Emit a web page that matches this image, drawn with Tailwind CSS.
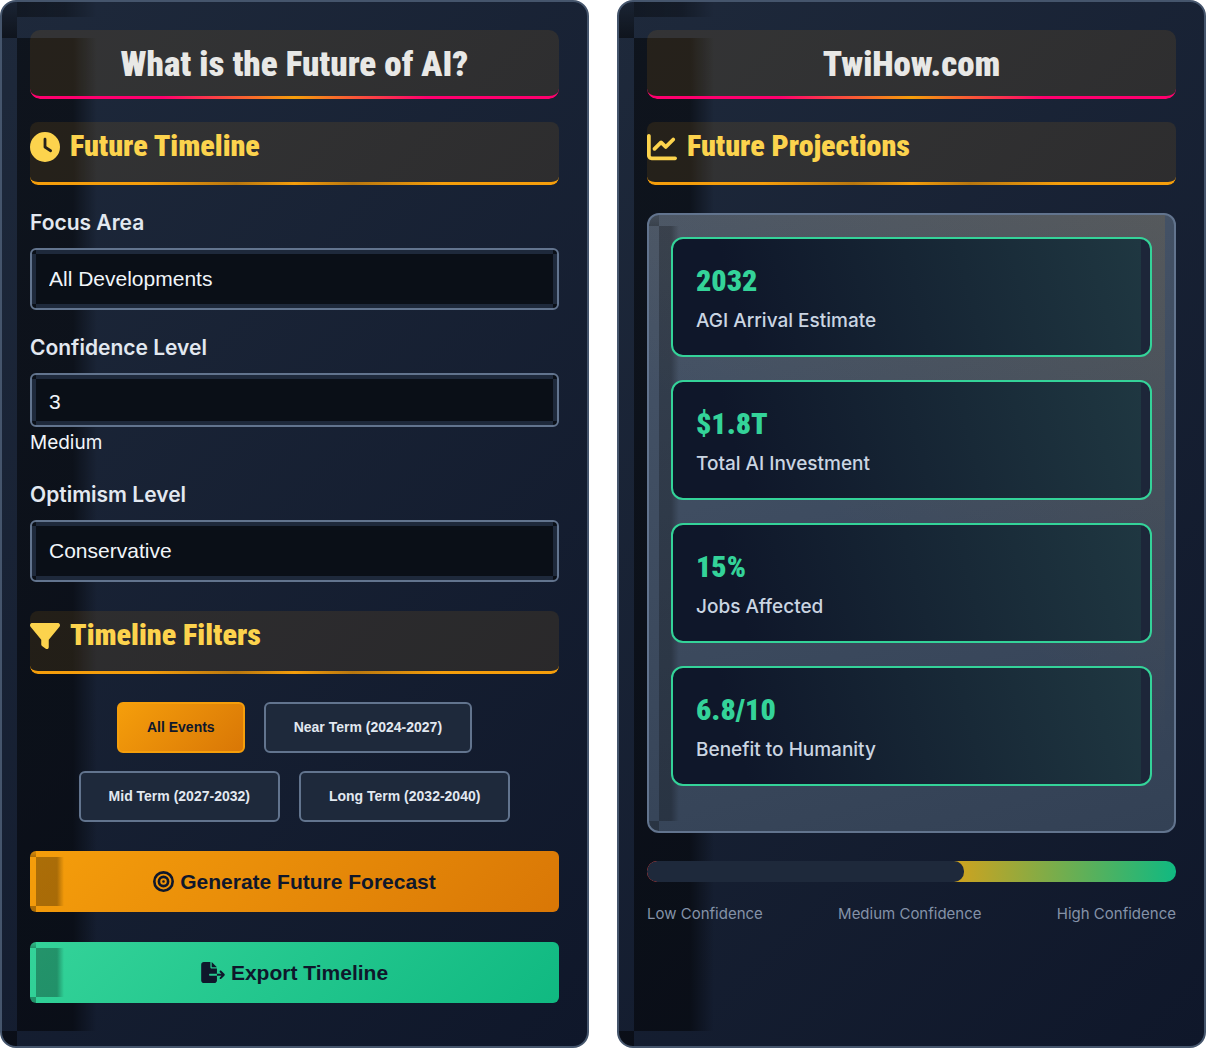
<!DOCTYPE html>
<html lang="en">
<head>
    <meta charset="UTF-8">
    <meta name="viewport" content="width=device-width, initial-scale=1.0">
    <title>What is the Future of AI?</title>
    <script src="https://cdn.jsdelivr.net/npm/@tailwindcss/browser@4"></script>
</head>
<body class="bg-white font-['Inter',sans-serif] text-slate-100">
    <div class="grid grid-cols-2 gap-7 min-h-screen">

        <!-- Controls -->
        <section class="border-2 border-slate-600 rounded-2xl p-7 pb-[43px] [background:linear-gradient(90deg,#00000080,#00000080_70%,#00000000)_15px_36px/80px_calc(100%-51px)_no-repeat,linear-gradient(#00000020,#00000080)_0_0/15px_36px_no-repeat,linear-gradient(90deg,#00000060,#00000050_60%,#00000000)_15px_0/80px_15px_no-repeat,linear-gradient(#00000080,#00000080)_0_100%/15px_15px_no-repeat,linear-gradient(135deg,#1e293b,#0f172a)_border-box]">
            <h1 class="relative h-[69px] rounded-[10px] bg-[#f59e0b]/10 text-center text-[35px] leading-[69px] font-black font-['Roboto_Condensed',Roboto,sans-serif] text-[#e8e8e6] after:absolute after:inset-0 after:rounded-b-[10px] after:border-b-3 after:border-transparent after:[background:linear-gradient(90deg,#ff006e_25%,#f59e0b_50%,#ff006e_75%)_border-box] after:[mask:linear-gradient(#000_0_0)_padding-box_exclude,linear-gradient(#000_0_0)]">What is the Future of AI?</h1>

            <h2 class="relative flex items-start gap-[10px] mt-[23px] h-[63px] rounded-lg bg-[#f59e0b]/10 text-[30px] leading-[48px] font-black font-['Roboto_Condensed',Roboto,sans-serif] text-[#fcd34d] after:absolute after:inset-0 after:rounded-b-lg after:border-b-3 after:border-transparent after:[background:linear-gradient(90deg,#f59e0b_22%,#b8770f_39%,#f59e0b_50%,#b8770f_61%,#f59e0b_78%)_border-box] after:[mask:linear-gradient(#000_0_0)_padding-box_exclude,linear-gradient(#000_0_0)]">
                <svg class="size-[30px] mt-[10px]" viewBox="0 0 512 512" fill="currentColor"><path d="M256 0a256 256 0 1 1 0 512A256 256 0 1 1 256 0zM232 120l0 136c0 8 4 15.5 10.7 20l96 64c11 7.4 25.9 4.4 33.3-6.7s4.4-25.9-6.7-33.3L280 243.2 280 120c0-13.3-10.7-24-24-24s-24 10.7-24 24z"/></svg>
                Future Timeline
            </h2>

            <div class="mt-6">
                <label for="focusArea" class="block mb-[11px] text-[21px] leading-7 font-semibold text-slate-200">Focus Area</label>
                <select id="focusArea" class="block w-full h-[62px] px-[17px] pb-px appearance-none border-2 border-slate-500 rounded-md text-[21px] font-['Liberation_Sans',Arial,sans-serif] [background:linear-gradient(#1e293b,#1e293b)_4px_0/calc(100%-8px)_4px_no-repeat,linear-gradient(#1e293b,#1e293b)_4px_100%/calc(100%-8px)_4px_no-repeat,linear-gradient(#1e293b,#1e293b)_0_4px/4px_calc(100%-8px)_no-repeat,linear-gradient(#1e293b,#1e293b)_100%_4px/4px_calc(100%-8px)_no-repeat,#0a0f17]">
                    <option>All Developments</option>
                    <option>AGI Progress</option>
                    <option>Economic Impact</option>
                </select>
            </div>

            <div class="mt-6">
                <label for="confidence" class="block mb-[11px] text-[21px] leading-7 font-semibold text-slate-200">Confidence Level</label>
                <input id="confidence" type="number" min="1" max="5" value="3" class="block w-full h-[54px] px-[17px] pt-5 pb-[17px] border-2 border-slate-500 rounded-md text-[21px] font-['Liberation_Sans',Arial,sans-serif] [background:linear-gradient(#1e293b,#1e293b)_4px_0/calc(100%-8px)_4px_no-repeat,linear-gradient(#1e293b,#1e293b)_4px_100%/calc(100%-8px)_4px_no-repeat,linear-gradient(#1e293b,#1e293b)_0_4px/4px_calc(100%-8px)_no-repeat,linear-gradient(#1e293b,#1e293b)_100%_4px/4px_calc(100%-8px)_no-repeat,#0a0f17]">
                <p class="mt-[2px] text-[19px] leading-7">Medium</p>
            </div>

            <div class="mt-6">
                <label for="optimism" class="block mb-[11px] text-[21px] leading-7 font-semibold text-slate-200">Optimism Level</label>
                <select id="optimism" class="block w-full h-[62px] px-[17px] pb-px appearance-none border-2 border-slate-500 rounded-md text-[21px] font-['Liberation_Sans',Arial,sans-serif] [background:linear-gradient(#1e293b,#1e293b)_4px_0/calc(100%-8px)_4px_no-repeat,linear-gradient(#1e293b,#1e293b)_4px_100%/calc(100%-8px)_4px_no-repeat,linear-gradient(#1e293b,#1e293b)_0_4px/4px_calc(100%-8px)_no-repeat,linear-gradient(#1e293b,#1e293b)_100%_4px/4px_calc(100%-8px)_no-repeat,#0a0f17]">
                    <option>Conservative</option>
                    <option>Balanced</option>
                    <option>Optimistic</option>
                </select>
            </div>

            <h2 class="relative flex items-start gap-[10px] mt-[29px] h-[63px] rounded-lg bg-[#f59e0b]/10 text-[30px] leading-[48px] font-black font-['Roboto_Condensed',Roboto,sans-serif] text-[#fcd34d] after:absolute after:inset-0 after:rounded-b-lg after:border-b-3 after:border-transparent after:[background:linear-gradient(90deg,#f59e0b_22%,#b8770f_39%,#f59e0b_50%,#b8770f_61%,#f59e0b_78%)_border-box] after:[mask:linear-gradient(#000_0_0)_padding-box_exclude,linear-gradient(#000_0_0)]">
                <svg class="size-[30px] mt-[10px]" viewBox="0 0 512 512" fill="currentColor"><path d="M3.9 54.9C10.5 40.9 24.5 32 40 32l432 0c15.5 0 29.5 8.9 36.1 22.9s4.6 30.5-5.2 42.5L320 320.9 320 448c0 12.1-6.8 23.2-17.7 28.6s-23.8 4.3-33.5-3l-64-48c-8.1-6-12.8-15.5-12.8-25.6l0-79.1L9 97.3C-.7 85.4-2.8 68.8 3.9 54.9z"/></svg>
                Timeline Filters
            </h2>

            <div class="flex flex-wrap justify-center gap-x-[19px] gap-y-[18px] mt-7 text-[14px] font-bold font-['Liberation_Sans',Arial,sans-serif] text-slate-200">
                <button class="h-[51px] px-7 border-2 border-[#f59e0b] rounded-md text-slate-900 [background:linear-gradient(135deg,#f59e0b,#d97706)]">All Events</button>
                <button class="h-[51px] px-7 border-2 border-slate-500 rounded-md bg-[#1e293b]">Near Term (2024-2027)</button>
                <button class="h-[51px] px-7 border-2 border-slate-500 rounded-md bg-[#1e293b]">Mid Term (2027-2032)</button>
                <button class="h-[51px] px-7 border-2 border-slate-500 rounded-md bg-[#1e293b]">Long Term (2032-2040)</button>
            </div>

            <div class="grid gap-[30px] mt-[29px] text-[21px] font-bold font-['Liberation_Sans',Arial,sans-serif] text-slate-900">
                <button class="flex items-center justify-center gap-[6px] h-[61px] rounded-md [background:linear-gradient(90deg,#0000004d,#0000004d_75%,#00000000)_6px_6px/28px_calc(100%-12px)_no-repeat,linear-gradient(#0000001a,#0000004d)_0_0/6px_6px_no-repeat,linear-gradient(#0000004d,#0000004d)_0_100%/6px_6px_no-repeat,linear-gradient(135deg,#f59e0b,#d97706)]">
                    <svg class="size-[21px]" viewBox="0 0 512 512" fill="currentColor"><path d="M448 256A192 192 0 1 0 64 256a192 192 0 1 0 384 0zM0 256a256 256 0 1 1 512 0A256 256 0 1 1 0 256zm256 80a80 80 0 1 0 0-160 80 80 0 1 0 0 160zm0-224a144 144 0 1 1 0 288 144 144 0 1 1 0-288zM224 256a32 32 0 1 1 64 0 32 32 0 1 1 -64 0z"/></svg>
                    Generate Future Forecast
                </button>
                <button class="flex items-center justify-center gap-[6px] h-[61px] rounded-md [background:linear-gradient(90deg,#0000004d,#0000004d_75%,#00000000)_6px_6px/28px_calc(100%-12px)_no-repeat,linear-gradient(#0000001a,#0000004d)_0_0/6px_6px_no-repeat,linear-gradient(#0000004d,#0000004d)_0_100%/6px_6px_no-repeat,linear-gradient(135deg,#34d399,#10b981)]">
                    <svg class="w-6 h-[21px]" viewBox="0 0 576 512" fill="currentColor"><path d="M0 64C0 28.7 28.7 0 64 0L224 0l0 128c0 17.7 14.3 32 32 32l128 0 0 128-168 0c-13.3 0-24 10.7-24 24s10.7 24 24 24l168 0 0 112c0 35.3-28.7 64-64 64L64 512c-35.3 0-64-28.7-64-64L0 64zM384 336l0-48 110.1 0-39-39c-9.4-9.4-9.4-24.6 0-33.9s24.6-9.4 33.9 0l80 80c9.4 9.4 9.4 24.6 0 33.9l-80 80c-9.4 9.4-24.6 9.4-33.9 0s-9.4-24.6 0-33.9l39-39L384 336zm0-208l-128 0L256 0 384 128z"/></svg>
                    Export Timeline
                </button>
            </div>
        </section>

        <!-- Projections -->
        <section class="border-2 border-slate-600 rounded-2xl p-7 [background:linear-gradient(90deg,#00000080,#00000080_70%,#00000000)_15px_36px/80px_calc(100%-51px)_no-repeat,linear-gradient(#00000020,#00000080)_0_0/15px_36px_no-repeat,linear-gradient(90deg,#00000060,#00000050_60%,#00000000)_15px_0/80px_15px_no-repeat,linear-gradient(#00000080,#00000080)_0_100%/15px_15px_no-repeat,linear-gradient(135deg,#1e293b,#0f172a)_border-box]">
            <h1 class="relative h-[69px] rounded-[10px] bg-[#f59e0b]/10 text-center text-[35px] leading-[69px] font-black font-['Roboto_Condensed',Roboto,sans-serif] text-[#e8e8e6] after:absolute after:inset-0 after:rounded-b-[10px] after:border-b-3 after:border-transparent after:[background:linear-gradient(90deg,#ff006e_25%,#f59e0b_50%,#ff006e_75%)_border-box] after:[mask:linear-gradient(#000_0_0)_padding-box_exclude,linear-gradient(#000_0_0)]">TwiHow.com</h1>

            <h2 class="relative flex items-start gap-[10px] mt-[23px] h-[63px] rounded-lg bg-[#f59e0b]/10 text-[30px] leading-[48px] font-black font-['Roboto_Condensed',Roboto,sans-serif] text-[#fcd34d] after:absolute after:inset-0 after:rounded-b-lg after:border-b-3 after:border-transparent after:[background:linear-gradient(90deg,#f59e0b_22%,#b8770f_39%,#f59e0b_50%,#b8770f_61%,#f59e0b_78%)_border-box] after:[mask:linear-gradient(#000_0_0)_padding-box_exclude,linear-gradient(#000_0_0)]">
                <svg class="size-[30px] mt-[10px]" viewBox="0 0 512 512" fill="currentColor"><path d="M64 64c0-17.7-14.3-32-32-32S0 46.3 0 64L0 400c0 44.2 35.8 80 80 80l400 0c17.7 0 32-14.3 32-32s-14.3-32-32-32L80 416c-8.8 0-16-7.2-16-16L64 64zm406.6 86.6c12.5-12.5 12.5-32.8 0-45.3s-32.8-12.5-45.3 0L320 210.7l-57.4-57.4c-12.5-12.5-32.8-12.5-45.3 0l-112 112c-12.5 12.5-12.5 32.8 0 45.3s32.8 12.5 45.3 0L240 221.3l57.4 57.4c12.5 12.5 32.8 12.5 45.3 0l128-128z"/></svg>
                Future Projections
            </h2>

            <div class="grid gap-[23px] mt-7 px-[22px] pt-[22px] pb-[45px] border-2 border-slate-500 rounded-xl [background:linear-gradient(90deg,#00000040,#00000040_60%,#00000000)_10px_11px/20px_calc(100%-21px)_no-repeat,linear-gradient(#00000020,#00000040)_0_0/10px_11px_no-repeat,linear-gradient(#00000040,#00000040)_0_100%/10px_10px_no-repeat,linear-gradient(35deg,#f59e0b00_45%,#f59e0b1a)_0_0/calc(100%-9px)_100%_no-repeat,linear-gradient(165deg,#475569,#334155)]">
                <div class="h-[120px] px-[23px] pt-6 border-2 border-[#34d399] rounded-xl [background:linear-gradient(75deg,#0f172a_15%,#1f3741)_0_0/calc(100%-9px)_100%_no-repeat,#1d2639]">
                    <div class="text-[30px] leading-9 font-black font-['Roboto_Condensed',Roboto,sans-serif] text-[#34d399]">2032</div>
                    <div class="mt-2 text-[19px] leading-7 font-medium text-slate-300">AGI Arrival Estimate</div>
                </div>
                <div class="h-[120px] px-[23px] pt-6 border-2 border-[#34d399] rounded-xl [background:linear-gradient(75deg,#0f172a_15%,#1f3741)_0_0/calc(100%-9px)_100%_no-repeat,#1d2639]">
                    <div class="text-[30px] leading-9 font-black font-['Roboto_Condensed',Roboto,sans-serif] text-[#34d399]">$1.8T</div>
                    <div class="mt-2 text-[19px] leading-7 font-medium text-slate-300">Total AI Investment</div>
                </div>
                <div class="h-[120px] px-[23px] pt-6 border-2 border-[#34d399] rounded-xl [background:linear-gradient(75deg,#0f172a_15%,#1f3741)_0_0/calc(100%-9px)_100%_no-repeat,#1d2639]">
                    <div class="text-[30px] leading-9 font-black font-['Roboto_Condensed',Roboto,sans-serif] text-[#34d399]">15%</div>
                    <div class="mt-2 text-[19px] leading-7 font-medium text-slate-300">Jobs Affected</div>
                </div>
                <div class="h-[120px] px-[23px] pt-6 border-2 border-[#34d399] rounded-xl [background:linear-gradient(75deg,#0f172a_15%,#1f3741)_0_0/calc(100%-9px)_100%_no-repeat,#1d2639]">
                    <div class="text-[30px] leading-9 font-black font-['Roboto_Condensed',Roboto,sans-serif] text-[#34d399]">6.8/10</div>
                    <div class="mt-2 text-[19px] leading-7 font-medium text-slate-300">Benefit to Humanity</div>
                </div>
            </div>

            <div class="mt-7 h-[21px] rounded-[10px] overflow-hidden [background:linear-gradient(90deg,#ef4444,#f59e0b_50%,#10b981)]">
                <div class="h-full rounded-[10px] bg-[#1e293b]" style="width: 60%"></div>
            </div>
            <div class="flex justify-between mt-5 text-[15px] leading-6 text-[#8492a8]">
                <span>Low Confidence</span>
                <span>Medium Confidence</span>
                <span>High Confidence</span>
            </div>
        </section>
    </div>
</body>
</html>
